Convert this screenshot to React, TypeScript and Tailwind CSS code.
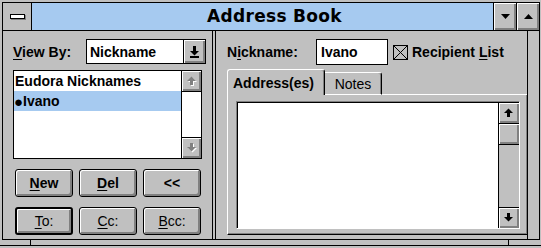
import React from "react";

const bevel = "bg-[#c0c0c0] shadow-[inset_1px_1px_0_#fff,inset_-2px_-2px_0_#808080]";

function TriDown() {
  return (
    <svg width="9" height="5" viewBox="0 0 9 5">
      <polygon points="0,0 9,0 4.5,5" fill="#000" />
    </svg>
  );
}

function TriUp() {
  return (
    <svg width="9" height="5" viewBox="0 0 9 5">
      <polygon points="0,5 9,5 4.5,0" fill="#000" />
    </svg>
  );
}

// scroll arrow with shaft
function ScrollArrow({ dir, disabled }: { dir: "up" | "down"; disabled?: boolean }) {
  const fill = disabled ? "#808080" : "#000";
  const parts = (c: string) =>
    dir === "up" ? (
      <>
        <polygon points="0,5 9,5 4.5,0.5" fill={c} />
        <rect x="3" y="5" width="3" height="4" fill={c} />
      </>
    ) : (
      <>
        <rect x="3" y="0" width="3" height="4" fill={c} />
        <polygon points="0,4 9,4 4.5,8.5" fill={c} />
      </>
    );
  return (
    <svg width="10" height="10" viewBox="0 0 10 10">
      {disabled && <g transform="translate(1,1)">{parts("#fff")}</g>}
      {parts(fill)}
    </svg>
  );
}

function DropArrow() {
  return (
    <svg width="9" height="12" viewBox="0 0 9 12">
      <rect x="3" y="0" width="3" height="5" fill="#000" />
      <polygon points="0,5 9,5 4.5,9.5" fill="#000" />
      <rect x="0" y="10" width="9" height="2" fill="#000" />
    </svg>
  );
}

function PushButton({
  label,
  u,
  rest,
  bold,
  isDefault,
}: {
  label?: string;
  u?: string;
  rest?: string;
  bold?: boolean;
  isDefault?: boolean;
}) {
  return (
    <div
      className={`w-[58px] h-[28px] rounded-[3px] flex items-center justify-center ${bevel} ${
        isDefault ? "border-2 border-black" : "border border-black"
      } ${bold ? "font-bold" : ""}`}
    >
      {label ? (
        label
      ) : (
        <span>
          <span className="underline underline-offset-2">{u}</span>
          {rest}
        </span>
      )}
    </div>
  );
}

function TitleBar() {
  return (
    <div className="h-[28px] flex border-b border-black">
      <div className="w-[29px] border-r border-black flex items-center justify-center bg-[#c0c0c0]">
        <div className="w-[15px] h-[5px] bg-white border border-black shadow-[1px_1px_0_#808080]" />
      </div>
      <div className="flex-1 bg-[#a6caf0] flex items-center justify-center pl-[24px] font-['DejaVu_Sans',sans-serif] font-bold text-[17px] tracking-[0.3px]">
        Address Book
      </div>
      <div className={`w-[23px] border-l border-black flex items-center justify-center ${bevel}`}>
        <TriDown />
      </div>
      <div className={`w-[23px] border-l border-black flex items-center justify-center ${bevel}`}>
        <TriUp />
      </div>
    </div>
  );
}

function LeftPane() {
  return (
    <div className="w-[210px] border-r border-black flex flex-col pl-[10px] pt-[8px]">
      <div className="flex items-center h-[25px]">
        <div className="w-[73px] font-bold">
          <span className="underline underline-offset-2">V</span>iew By:
        </div>
        <div className="w-[120px] h-[25px] border border-black bg-white flex">
          <div className="flex-1 flex items-center pl-[3px] font-bold">Nickname</div>
          <div className={`w-[22px] border-l border-black flex items-center justify-center ${bevel}`}>
            <DropArrow />
          </div>
        </div>
      </div>

      <div className="mt-[6px] w-[189px] h-[89px] border border-black bg-white flex">
        <div className="flex-1 flex flex-col font-bold">
          <div className="h-[20px] flex items-center pl-[1px]">Eudora Nicknames</div>
          <div className="h-[20px] flex items-center bg-[#a6caf0]">
            <span className="text-[15px] leading-none">●</span>Ivano
          </div>
        </div>
        <div className="w-[20px] border-l border-black flex flex-col justify-between">
          <div className={`h-[21px] border-b border-black flex items-center justify-center ${bevel}`}>
            <ScrollArrow dir="up" disabled />
          </div>
          <div className={`h-[21px] border-t border-black flex items-center justify-center ${bevel}`}>
            <ScrollArrow dir="down" disabled />
          </div>
        </div>
      </div>

      <div className="mt-[10px] ml-[2px] flex gap-[6px]">
        <PushButton u="N" rest="ew" bold />
        <PushButton u="D" rest="el" bold />
        <PushButton label="<<" bold />
      </div>
      <div className="mt-[10px] ml-[2px] flex gap-[6px]">
        <PushButton u="T" rest="o:" isDefault />
        <PushButton u="C" rest="c:" />
        <PushButton u="B" rest="cc:" />
      </div>
    </div>
  );
}

function RightPane() {
  return (
    <div className="flex-1 flex">
      <div className="w-[313px] border-l border-r border-black flex flex-col pl-[11px] pt-[8px]">
        <div className="flex items-center h-[26px]">
          <div className="w-[89px] font-bold">
            N<span className="underline underline-offset-2">i</span>ckname:
          </div>
          <div className="w-[72px] h-[26px] border border-black bg-white flex items-center pl-[4px] font-bold">
            Ivano
          </div>
          <div className="ml-[5px] w-[15px] h-[15px] border border-black">
            <svg width="13" height="13" viewBox="0 0 13 13">
              <line x1="0" y1="0" x2="13" y2="13" stroke="#000" strokeWidth="1" />
              <line x1="13" y1="0" x2="0" y2="13" stroke="#000" strokeWidth="1" />
            </svg>
          </div>
          <div className="ml-[4px] font-bold">
            Recipient <span className="underline underline-offset-2">L</span>ist
          </div>
        </div>

        {/* tabs */}
        <div className="mt-[4px] flex items-end h-[26px]">
          <div className="w-[98px] h-[26px] border-t border-l border-white border-r border-r-black rounded-tl-[3px] rounded-tr-[3px] flex items-center pl-[5px] font-bold shadow-[inset_-1px_0_0_#808080]">
            Address(es)
          </div>
          <div className="w-[57px] h-[23px] border-t border-white border-r border-r-black border-b border-b-white rounded-tr-[3px] flex items-center justify-center shadow-[inset_-1px_0_0_#808080]">
            Notes
          </div>
          <div className="flex-1 border-b border-white" />
        </div>

        {/* tab panel */}
        <div className="w-[301px] h-[140px] border-l border-white border-r border-b border-r-black border-b-black shadow-[inset_-1px_-1px_0_#808080] pl-[8px] pt-[6px]">
          <div className="w-[284px] h-[128px] border-t border-l border-[#808080] border-b border-r border-b-white border-r-white">
            <div className="w-full h-full border-t border-l border-black bg-white flex">
              <div className="flex-1" />
              <div className="w-[21px] border-l border-black flex flex-col bg-[#c0c0c0]">
                <div className={`h-[21px] border-b border-black flex items-center justify-center ${bevel}`}>
                  <ScrollArrow dir="up" />
                </div>
                <div className={`h-[21px] border-b border-black ${bevel}`} />
                <div className="flex-1" />
                <div className={`h-[21px] border-t border-black flex items-center justify-center ${bevel}`}>
                  <ScrollArrow dir="down" />
                </div>
              </div>
            </div>
          </div>
        </div>
      </div>
      <div className="flex-1" />
    </div>
  );
}

export default function App() {
  return (
    <div className="w-[541px] h-[248px] bg-[#c0c0c0] overflow-hidden font-['Liberation_Sans',Arial,sans-serif] text-[14px] leading-none text-black select-none">
      <div className="ml-[2px] mt-[2px] w-[538px] h-[238px] border border-black flex flex-col">
        <TitleBar />
        <div className="flex flex-1 min-h-0">
          <LeftPane />
          <div className="w-[2px]" />
          <RightPane />
        </div>
      </div>
      {/* bottom frame with resize marks */}
      <div className="h-[6px] flex border-b border-black">
        <div className="w-[31px] border-r border-black" />
        <div className="w-[478px] border-r border-black" />
        <div className="flex-1" />
      </div>
    </div>
  );
}
